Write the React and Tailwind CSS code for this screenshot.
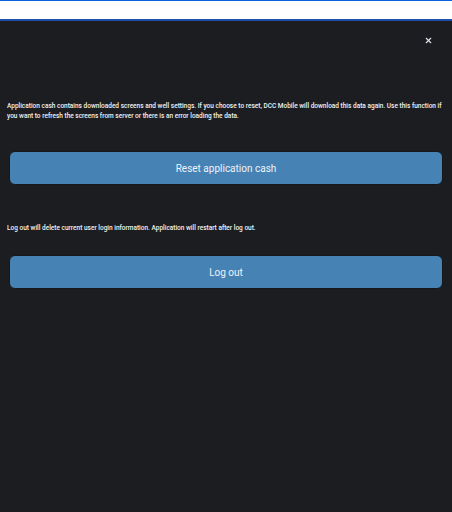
import { X } from 'lucide-react'

const SettingsButton = ({ children }) => (
  <button className="flex h-[34px] w-full items-center justify-center rounded-[6px] border border-[#15171a] bg-[#4682b4] text-[10px] text-[#eef3f8]">
    {children}
  </button>
)

const App = () => {
  return (
    <div className="flex h-[512px] w-[452px] flex-col bg-[#1b1d20] font-['Roboto',sans-serif]">
      {/* top bar */}
      <div className="h-[21px] shrink-0 border-b-2 border-t border-b-[#1f4fa8] border-t-[#0a63d8] bg-white" />

      <div className="flex justify-end pr-[19px] pt-[15px]">
        <X className="h-[9px] w-[9px] text-[#dde6f0]" strokeWidth={3} />
      </div>

      <div className="px-[7px] pt-[56px]">
        <p className="text-[6.5px] font-medium leading-[10px] text-[#f2f2f2]">
          Application cash contains downloaded screens and well settings. If you choose to reset, DCC Mobile will download
          this data again. Use this function if you want to refresh the screens from server or there is an error loading the data.
        </p>
      </div>

      <div className="px-[9px] pt-[30px]">
        <SettingsButton>Reset application cash</SettingsButton>
      </div>

      <div className="px-[7px] pt-[38px]">
        <p className="text-[6.5px] font-medium leading-[10px] text-[#f2f2f2]">
          Log out will delete current user login information. Application will restart after log out.
        </p>
      </div>

      <div className="px-[9px] pt-[22px]">
        <SettingsButton>Log out</SettingsButton>
      </div>
    </div>
  )
}

export default App
